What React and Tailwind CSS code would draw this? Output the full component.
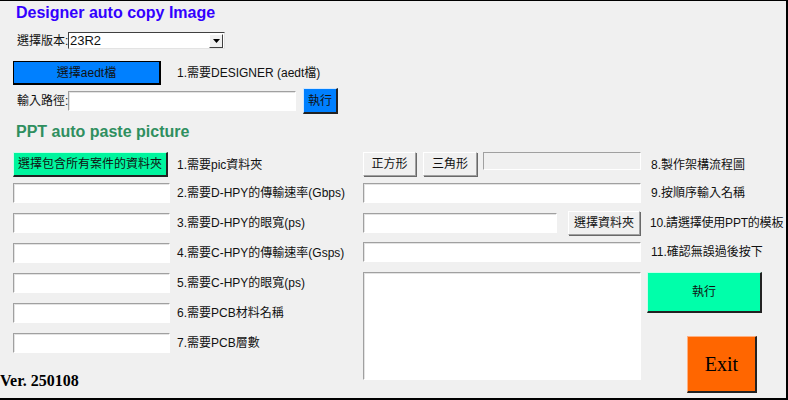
const FONT = "font-['Liberation_Sans','Noto_Sans_CJK_TC',sans-serif]"

const LEFT_FIELDS = [
  '2.需要D-HPY的傳輸速率(Gbps)',
  '3.需要D-HPY的眼寬(ps)',
  '4.需要C-HPY的傳輸速率(Gsps)',
  '5.需要C-HPY的眼寬(ps)',
  '6.需要PCB材料名稱',
  '7.需要PCB層數',
]

function Sunken({ className = '' }) {
  return (
    <div
      className={`border border-t-[#a0a0a0] border-l-[#a0a0a0] border-r-white border-b-white bg-white shadow-[inset_1px_1px_0_#e3e3e3] ${className}`}
    />
  )
}

function GrayButton({ children, className = '' }) {
  return (
    <button
      type="button"
      className={`flex items-center justify-center border border-t-white border-l-white border-r-[#a0a0a0] border-b-[#a0a0a0] bg-[#f0f0f0] shadow-[1px_1px_0_#696969] ${className}`}
    >
      {children}
    </button>
  )
}

function App() {
  return (
    <div
      className={`h-[400px] w-[788px] overflow-hidden whitespace-nowrap border-t border-r-2 border-b-2 border-black bg-[#f0f0f0] text-[12px] leading-[14px] text-[#111] ${FONT}`}
    >
      <div className="ml-[16px] mt-[2px] h-[20px] text-[16px] font-bold leading-[20px] text-[#3300ff]">
        Designer auto copy Image
      </div>

      <div className="ml-[17px] mt-[9px] flex h-[17px] items-center">
        <span className="w-[51px] shrink-0">選擇版本:</span>
        <div className="flex h-[17px] w-[157px] items-center justify-between border border-t-[#404040] border-l-[#404040] border-r-[#e3e3e3] border-b-[#e3e3e3] bg-white">
          <span className="pl-[1px] text-[13px]">23R2</span>
          <span className="mr-[1px] flex h-[14px] w-[14px] items-center justify-center border border-t-white border-l-white border-r-[#404040] border-b-[#404040] bg-[#f0f0f0]">
            <svg width="7" height="4" viewBox="0 0 7 4">
              <path d="M0 0h7L3.5 4z" fill="#000" />
            </svg>
          </span>
        </div>
      </div>

      <div className="ml-[13px] mt-[12px] flex h-[24px] items-center">
        <button
          type="button"
          className="flex h-[24px] w-[148px] items-center justify-center border border-r-2 border-b-2 border-black bg-[#0080ff]"
        >
          選擇aedt檔
        </button>
        <span className="ml-[16px]">1.需要DESIGNER (aedt檔)</span>
      </div>

      <div className="ml-[17px] mt-[3px] flex h-[26px] items-center">
        <span className="w-[51px] shrink-0">輸入路徑:</span>
        <Sunken className="h-[20px] w-[228px]" />
        <button
          type="button"
          className="ml-[7px] flex h-[26px] w-[35px] items-center justify-center border border-t-[#cfe6ff] border-l-[#cfe6ff] border-r-2 border-b-2 border-r-[#222] border-b-[#222] bg-[#0080ff]"
        >
          執行
        </button>
      </div>

      <div className="ml-[16px] mt-[8px] h-[20px] text-[16px] font-bold leading-[20px] text-[#2f8f5f]">
        PPT auto paste picture
      </div>

      <div className="mt-[10px] flex">
        {/* left column */}
        <div className="ml-[13px] flex w-[350px] shrink-0 flex-col">
          <div className="flex h-[25px] items-center">
            <button
              type="button"
              className="flex h-[25px] w-[155px] items-center justify-center border border-t-[#c8ffe8] border-l-[#c8ffe8] border-r-2 border-b-2 border-r-[#222] border-b-[#222] bg-[#00f59e]"
            >
              選擇包含所有案件的資料夾
            </button>
            <span className="ml-[9px]">1.需要pic資料夾</span>
          </div>
          <div className="mt-[6px] flex flex-col gap-[10px]">
            {LEFT_FIELDS.map((label) => (
              <div key={label} className="flex h-[20px] items-center">
                <Sunken className="h-[20px] w-[157px]" />
                <span className="ml-[7px]">{label}</span>
              </div>
            ))}
          </div>
          <div className="-ml-[13px] mt-[19px] font-['Liberation_Serif',serif] text-[16px] font-bold leading-[18px] text-black">
            Ver. 250108
          </div>
        </div>

        {/* right column */}
        <div className="flex flex-col">
          <div className="flex h-[25px] items-start">
            <GrayButton className="h-[24px] w-[53px]">正方形</GrayButton>
            <GrayButton className="ml-[7px] h-[24px] w-[54px]">三角形</GrayButton>
            <div className="ml-[6px] h-[18px] w-[158px] border border-t-[#a0a0a0] border-l-[#a0a0a0] border-r-white border-b-white" />
            <span className="ml-[10px] self-center">8.製作架構流程圖</span>
          </div>
          <div className="mt-[6px] flex h-[20px] items-center">
            <Sunken className="h-[20px] w-[278px]" />
            <span className="ml-[10px]">9.按順序輸入名稱</span>
          </div>
          <div className="mt-[7px] flex h-[25px] items-center">
            <Sunken className="h-[20px] w-[194px]" />
            <GrayButton className="ml-[11px] h-[24px] w-[72px]">選擇資料夾</GrayButton>
            <span className="ml-[10px] tracking-[-0.2px]">10.請選擇使用PPT的模板</span>
          </div>
          <div className="mt-[7px] flex h-[20px] items-center">
            <Sunken className="h-[20px] w-[278px]" />
            <span className="ml-[10px]">11.確認無誤過後按下</span>
          </div>
          <div className="mt-[10px] flex">
            <Sunken className="h-[108px] w-[278px]" />
            <div className="ml-[6px] flex flex-col">
              <button
                type="button"
                className="flex h-[41px] w-[115px] items-center justify-center border border-t-[#c8ffe8] border-l-[#c8ffe8] border-r-2 border-b-2 border-r-[#222] border-b-[#222] bg-[#00ffaa]"
              >
                執行
              </button>
              <button
                type="button"
                className="ml-[40px] mt-[23px] flex h-[57px] w-[70px] items-center justify-center border border-t-[#ffb080] border-l-[#ffb080] border-r-2 border-b-2 border-r-[#222] border-b-[#222] bg-[#ff6600] font-['Liberation_Serif',serif] text-[20px] text-black"
              >
                Exit
              </button>
            </div>
          </div>
        </div>
      </div>
    </div>
  )
}

export default App
